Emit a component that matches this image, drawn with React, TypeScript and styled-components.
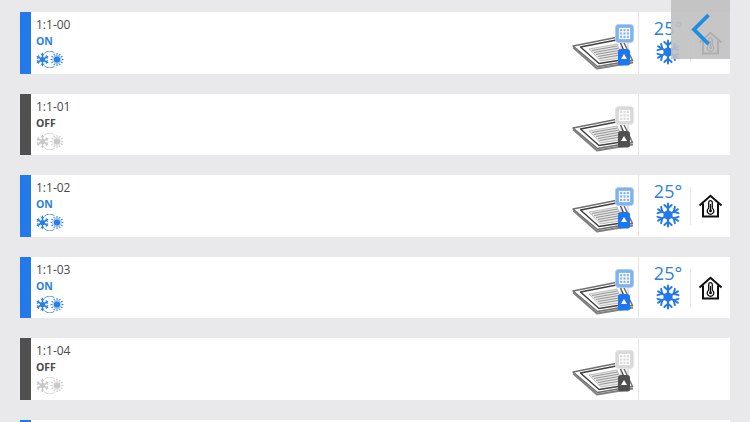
import React from "react";
import styled, { createGlobalStyle } from "styled-components";

const BLUE = "#2479ea";
const TEXT_BLUE = "#2f7fdc";
const DARK = "#505050";

const Global = createGlobalStyle`
  html, body { margin: 0; padding: 0; background: #e9e9eb; }
  body { width: 750px; height: 422px; overflow: hidden; font-family: "Open Sans", "Liberation Sans", sans-serif; }
`;

const Page = styled.div`
  position: relative;
  width: 750px;
  height: 422px;
  overflow: hidden;
  background: #e9e9eb;
`;

const List = styled.div`
  display: flex;
  flex-direction: column;
  gap: 20px;
  padding: 12px 20px 0;
`;

const Row = styled.div`
  display: flex;
  flex: none;
  height: 61.6px;
  background: #fff;
`;

const StatusBar = styled.div<{ $on: boolean }>`
  flex: none;
  width: 11px;
  background: ${(p) => (p.$on ? BLUE : DARK)};
`;

const Info = styled.div`
  flex: 1;
  display: flex;
  flex-direction: column;
  padding: 4px 0 0 5px;
`;

const Name = styled.div`
  font-size: 12px;
  line-height: 17px;
  color: #4a4a4a;
`;

const State = styled.div<{ $on: boolean }>`
  font-size: 10.5px;
  font-weight: 700;
  line-height: 15px;
  margin-top: 1px;
  color: ${(p) => (p.$on ? TEXT_BLUE : "#4a4a4a")};
`;

const ModeSlot = styled.div`
  display: flex;
  margin-top: 2px;
`;

const UnitSlot = styled.div`
  flex: none;
  width: 67px;
  padding-top: 11px;
`;

const ControlPanel = styled.div`
  flex: none;
  width: 92px;
  display: flex;
  align-items: center;
  border-left: 1.5px solid #e6e6e8;
  box-sizing: border-box;
`;

const Setpoint = styled.div`
  flex: none;
  align-self: flex-start;
  box-sizing: border-box;
  width: 51px;
  padding: 6px 0 0 7px;
  display: flex;
  flex-direction: column;
  align-items: center;
`;

const Temp = styled.div`
  font-size: 18px;
  line-height: 20px;
  color: ${TEXT_BLUE};
`;

const FlakeSlot = styled.div`
  display: flex;
  margin-top: 1px;
`;

const VLine = styled.div`
  flex: none;
  width: 1px;
  height: 38px;
  background: #e6e6e6;
`;

const HomeSlot = styled.div`
  flex: 1;
  display: flex;
  justify-content: center;
  padding-right: 1px;
`;

const BackButton = styled.div`
  position: absolute;
  top: 0;
  left: 671px;
  width: 59px;
  height: 59px;
  display: flex;
  align-items: center;
  justify-content: center;
  background: rgba(192, 192, 192, 0.9);
`;

const Mode = ({ on }: { on: boolean }) => {
  const c = on ? "#2a7fe6" : "#c9c9c9";
  const rays = Array.from({ length: 12 }, (_, i) => (i * Math.PI) / 6);
  return (
    <svg width="28" height="17" viewBox="0 0 28 17">
      <g stroke={c} strokeWidth="1.5" strokeLinecap="round" fill="none">
        {[0, 60, 120, 180, 240, 300].map((a) => (
          <g key={a} transform={`rotate(${a} 6.5 8.5)`}>
            <line x1="6.5" y1="8.5" x2="6.5" y2="2.6" />
            <path d="M5 3.2 L6.5 4.6 L8 3.2" strokeWidth="1" />
          </g>
        ))}
      </g>
      <circle cx="6.5" cy="8.5" r="2.6" fill={c} />
      <circle cx="21" cy="8.5" r="3.2" fill={c} />
      <circle cx="21" cy="8.5" r="4.2" fill="none" stroke={c} strokeWidth="0.5" />
      <g stroke={c} strokeWidth="1.1">
        {rays.map((a) => (
          <line
            key={a}
            x1={21 + Math.cos(a) * 4.8}
            y1={8.5 + Math.sin(a) * 4.8}
            x2={21 + Math.cos(a) * 6.4}
            y2={8.5 + Math.sin(a) * 6.4}
          />
        ))}
      </g>
      <g fill="none" stroke={c} strokeWidth="0.8">
        <path d="M8.5 2.2 A7.5 7.5 0 0 1 18.5 1.8" />
        <path d="M8.5 14.8 A7.5 7.5 0 0 0 18.5 15.2" />
      </g>
    </svg>
  );
};

const Cassette = ({ on }: { on: boolean }) => {
  const tileFill = on ? "#7fb2ef" : "#d9d9d9";
  const tileEdge = on ? "#a9cdf5" : "#e4e4e4";
  const lock = on ? "#1f75ee" : DARK;
  return (
    <svg width="66" height="50" viewBox="0 0 66 50">
      <path d="M2 23 L50 13.5 L61.5 37.5 L26.5 43.5 Z" fill="#fff" stroke="#707070" strokeWidth="1.5" strokeLinejoin="round" />
      <path d="M2.2 24.5 L26 45.5 L62 39.5" fill="none" stroke="#808080" strokeWidth="2" strokeLinejoin="round" />
      <path d="M9.5 24 L48 16.5 L56.5 36 L28 40.5 Z" fill="#fff" stroke="#404040" strokeWidth="1.4" strokeLinejoin="round" />
      <path d="M18 26 L46 21 L52 34.5 L29.5 38 Z" fill="#e6e6e6" stroke="#9a9a9a" strokeWidth="0.6" />
      <g stroke="#8c8c8c" strokeWidth="0.9">
        <line x1="21" y1="27.5" x2="46.5" y2="23" />
        <line x1="23" y1="29.5" x2="47.5" y2="25.2" />
        <line x1="25" y1="31.5" x2="48.5" y2="27.4" />
        <line x1="27" y1="33.5" x2="49.5" y2="29.6" />
        <line x1="28.5" y1="35.5" x2="50.5" y2="31.8" />
      </g>
      <g stroke="#a8a8a8" strokeWidth="0.7">
        <line x1="50" y1="19" x2="50" y2="27" />
        <line x1="57" y1="19" x2="57" y2="27" />
      </g>
      <rect x="44.5" y="1.5" width="18" height="18" rx="3" fill={tileFill} stroke={tileEdge} strokeWidth="1" />
      <g stroke="#fff" strokeWidth="1.2">
        <rect x="48.5" y="5.5" width="10" height="10" fill="none" />
        <line x1="51.8" y1="5.5" x2="51.8" y2="15.5" />
        <line x1="55.2" y1="5.5" x2="55.2" y2="15.5" />
        <line x1="48.5" y1="8.8" x2="58.5" y2="8.8" />
        <line x1="48.5" y1="12.2" x2="58.5" y2="12.2" />
      </g>
      <path d="M47 29 Q47 26 50 26 L56 26 Q59 26 59 29 L59 40 Q59 42.5 56.5 42.5 L49.5 42.5 Q47 42.5 47 40 Z" fill={lock} />
      <path d="M53 31 L56 36 L50 36 Z" fill="#fff" />
    </svg>
  );
};

const Snowflake = () => (
  <svg width="26" height="26" viewBox="0 0 26 26">
    <g stroke={BLUE} strokeWidth="2" strokeLinecap="round" fill="none">
      {[0, 60, 120, 180, 240, 300].map((a) => (
        <g key={a} transform={`rotate(${a} 13 13)`}>
          <line x1="13" y1="13" x2="13" y2="1.6" />
          <path d="M9.4 3 L13 6.4 L16.6 3" />
        </g>
      ))}
    </g>
    <path d="M13 7.8 L17.5 10.4 L17.5 15.6 L13 18.2 L8.5 15.6 L8.5 10.4 Z" fill={BLUE} />
  </svg>
);

const Home = () => (
  <svg width="25" height="24" viewBox="0 0 25 24">
    <path
      d="M1.5 11.5 L12.5 1.8 L23.5 11.5 M5 9.5 V22.5 H20 V9.5"
      fill="none"
      stroke="#111"
      strokeWidth="2"
      strokeLinejoin="miter"
    />
    <path
      d="M10.7 8.5 A1.8 1.8 0 0 1 14.3 8.5 V14.2 A3.3 3.3 0 1 1 10.7 14.2 Z"
      fill="none"
      stroke="#111"
      strokeWidth="1.3"
    />
    <circle cx="12.5" cy="16.8" r="1.5" fill="#111" />
    <line x1="12.5" y1="10" x2="12.5" y2="16" stroke="#111" strokeWidth="1.2" />
  </svg>
);

const Chevron = () => (
  <svg width="20" height="33" viewBox="0 0 20 33">
    <path d="M17.5 2 L3 16.5 L17.5 31" fill="none" stroke="#1c8fe3" strokeWidth="3.8" />
  </svg>
);

const units = [
  { id: "1:1-00", on: true },
  { id: "1:1-01", on: false },
  { id: "1:1-02", on: true },
  { id: "1:1-03", on: true },
  { id: "1:1-04", on: false },
];

export default function App() {
  return (
    <Page>
      <Global />
      <List>
        {units.map((u) => (
          <Row key={u.id}>
            <StatusBar $on={u.on} />
            <Info>
              <Name>{u.id}</Name>
              <State $on={u.on}>{u.on ? "ON" : "OFF"}</State>
              <ModeSlot>
                <Mode on={u.on} />
              </ModeSlot>
            </Info>
            <UnitSlot>
              <Cassette on={u.on} />
            </UnitSlot>
            <ControlPanel>
              {u.on && (
                <>
                  <Setpoint>
                    <Temp>25°</Temp>
                    <FlakeSlot>
                      <Snowflake />
                    </FlakeSlot>
                  </Setpoint>
                  <VLine />
                  <HomeSlot>
                    <Home />
                  </HomeSlot>
                </>
              )}
            </ControlPanel>
          </Row>
        ))}
        <Row>
          <StatusBar $on />
        </Row>
      </List>
      <BackButton>
        <Chevron />
      </BackButton>
    </Page>
  );
}
